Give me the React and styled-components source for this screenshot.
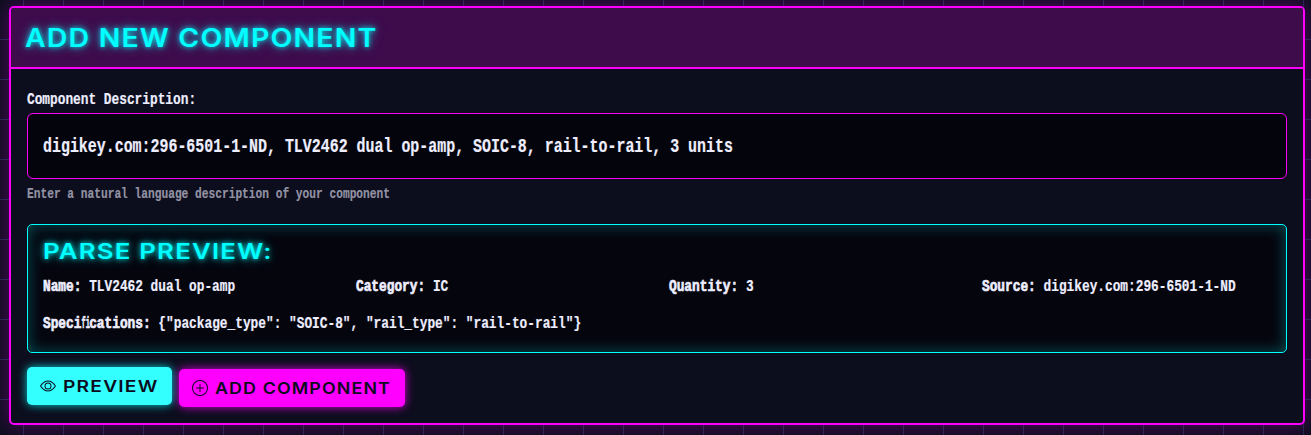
import React from "react";
import styled, { createGlobalStyle } from "styled-components";
import { BsEye, BsPlusCircle } from "react-icons/bs";

const Global = createGlobalStyle`
  * { box-sizing: border-box; }
  html { height: 100%; background: #0d0d1f; }
  body {
    margin: 0;
    height: 435px;
    overflow: hidden;
    color: #eeeeff;
    font-family: "Liberation Mono", monospace;
    background-image:
      linear-gradient(to right, transparent 39px, #1d294a 39px),
      linear-gradient(to bottom, transparent 39px, #1d294a 39px);
    background-size: 40px 40px;
    background-position: -16px 0;
  }
`;

const Page = styled.main`
  padding: 6px 6px 0 9px;
`;

const Card = styled.section`
  height: 419px;
  border: 2px solid #ff00ff;
  border-radius: 5px;
  background: #0c0d1d;
  box-shadow: 0 0 20px rgba(255, 0, 255, 0.3);
  overflow: hidden;
`;

const CardHeader = styled.header`
  height: 61px;
  padding: 15px 14px 0 14px;
  background: #3e0b4b;
  border-bottom: 2px solid #ff00ff;
`;

const Heading = styled.h2`
  margin: 0;
  width: max-content;
  font-family: Inter, sans-serif;
  font-weight: 600;
  font-size: ${(p) => p.$size}px;
  line-height: ${(p) => p.$line}px;
  letter-spacing: 1px;
  color: #00ffff;
  text-transform: uppercase;
  white-space: nowrap;
  text-shadow: 0 0 5px #00ffffcc, 0 0 10px #00ffff99;
  transform: scaleX(${(p) => p.$stretch});
  transform-origin: left;
`;

const CardBody = styled.div`
  padding: 22px 16px 0;
`;

const Mono = styled.div`
  display: block;
  width: max-content;
  font-weight: 700;
  font-size: ${(p) => p.$size}px;
  line-height: ${(p) => p.$line}px;
  color: ${(p) => p.$color || "#eeeeff"};
  white-space: pre;
  -webkit-text-stroke: 0.2px currentColor;
  transform: scaleX(${(p) => p.$squeeze});
  transform-origin: left;
`;

const Field = styled.div`
  display: flex;
  align-items: center;
  height: 66px;
  margin: 4px 0 7px;
  padding: 2px 15px 0;
  border: 1px solid #ff00ff;
  border-radius: 6px;
  background: #04040c;
`;

const Preview = styled.div`
  height: 129px;
  margin-top: 21px;
  padding: 13px 15px 0;
  border: 1px solid #00ffff;
  border-radius: 5px;
  background: #05050e;
  box-shadow: inset 0 0 15px rgba(0, 255, 255, 0.3);
`;

const Columns = styled.div`
  display: grid;
  grid-template-columns: repeat(4, 289px);
  gap: 24px;
  margin: 13px 0 17px;
`;

const Key = styled.strong`
  -webkit-text-stroke: 0.7px currentColor;
`;

const Ligature = styled.span`
  display: inline-block;
  margin-right: -0.6em;
  transform: scaleX(0.55);
  transform-origin: left;
`;

const Actions = styled.div`
  display: flex;
  gap: 7px;
  margin-top: 14px;
`;

const Button = styled.button`
  display: flex;
  align-items: center;
  gap: 7px;
  width: ${(p) => p.$width}px;
  height: 38px;
  margin: ${(p) => (p.$raised ? 0 : 2)}px 0 0;
  padding: 0 13px;
  border: 0;
  border-radius: 5px;
  color: #0c0c1d;
  background: ${(p) => p.$fill};
  box-shadow: 0 0 10px ${(p) => p.$glow};

  svg { flex: none; }
`;

const ButtonText = styled.span`
  font-family: Inter, sans-serif;
  font-weight: 600;
  font-size: 16px;
  line-height: 24px;
  letter-spacing: 1px;
  white-space: nowrap;
  transform: scaleX(${(p) => p.$stretch});
  transform-origin: left;
`;

const details = [
  ["Name:", "TLV2462 dual op-amp"],
  ["Category:", "IC"],
  ["Quantity:", "3"],
  ["Source:", "digikey.com:296-6501-1-ND"],
];

function Detail({ name, value }) {
  return (
    <Mono $size={17} $line={20} $squeeze={0.7535}>
      <Key>{name}</Key> {value}
    </Mono>
  );
}

export default function App() {
  return (
    <Page>
      <Global />
      <Card>
        <CardHeader>
          <Heading $size={25} $line={30} $stretch={1.14}>Add New Component</Heading>
        </CardHeader>
        <CardBody>
          <Mono as="label" $size={17} $line={18} $squeeze={0.7535}>Component Description:</Mono>
          <Field>
            <Mono $size={19.6} $line={24} $squeeze={0.762}>
              digikey.com:296-6501-1-ND, TLV2462 dual op-amp, SOIC-8, rail-to-rail, 3 units
            </Mono>
          </Field>
          <Mono $size={14.8} $line={17} $squeeze={0.757} $color="#9393a4">
            Enter a natural language description of your component
          </Mono>
          <Preview>
            <Heading as="h3" $size={21.5} $line={26} $stretch={1.2}>Parse Preview:</Heading>
            <Columns>
              {details.map(([name, value]) => (
                <Detail key={name} name={name} value={value} />
              ))}
            </Columns>
            <Detail
              name={<>Speci<Ligature>fi</Ligature>cations:</>}
              value={'{"package_type": "SOIC-8", "rail_type": "rail-to-rail"}'}
            />
          </Preview>
          <Actions>
            <Button $width={145} $raised $fill="#33ffff" $glow="#00ffffcc">
              <BsEye size={16} />
              <ButtonText $stretch={1.2}>PREVIEW</ButtonText>
            </Button>
            <Button $width={226} $fill="#ff00ff" $glow="#ff00ffcc">
              <BsPlusCircle size={16} />
              <ButtonText $stretch={1.115}>ADD COMPONENT</ButtonText>
            </Button>
          </Actions>
        </CardBody>
      </Card>
    </Page>
  );
}
